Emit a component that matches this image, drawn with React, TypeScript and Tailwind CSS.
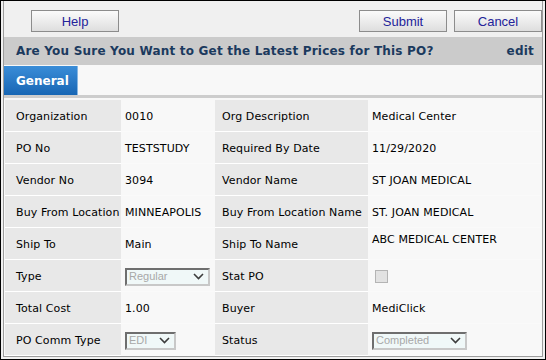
import React from 'react'

const verdana = { fontFamily: '"DejaVu Sans", Verdana, sans-serif' }

const Btn = ({ label }: { label: string }) => (
  <button
    className="w-[88px] h-[22px] border border-[#8c8c8c] bg-gradient-to-b from-[#fbfbfb] to-[#dedede] text-[13px] text-[#23239a] leading-none"
    style={{ fontFamily: '"Liberation Sans", Arial, sans-serif' }}
  >
    {label}
  </button>
)

const Select = ({ value, width }: { value: string; width: string }) => (
  <div
    className={`${width} h-[18px] flex items-center justify-between border-2 border-t-[#6e6e6e] border-l-[#6e6e6e] border-r-[#c8c8c8] border-b-[#c8c8c8] bg-[#f0f8f8] pl-[2px] pr-[4px] text-[11px] text-[#a8a8a8] tracking-normal`}
    style={{ fontFamily: '"Liberation Sans", Arial, sans-serif' }}
  >
    <span>{value}</span>
    <svg width="11" height="7" viewBox="0 0 11 7">
      <path d="M1 1 L5.5 5.5 L10 1" fill="none" stroke="#3c3c3c" strokeWidth="1.6" />
    </svg>
  </div>
)

type Row = {
  l1: string
  v1: React.ReactNode
  l2: string
  v2: React.ReactNode
  top?: boolean
}

const rows: Row[] = [
  { l1: 'Organization', v1: '0010', l2: 'Org Description', v2: 'Medical Center' },
  { l1: 'PO No', v1: 'TESTSTUDY', l2: 'Required By Date', v2: '11/29/2020' },
  { l1: 'Vendor No', v1: '3094', l2: 'Vendor Name', v2: 'ST JOAN MEDICAL' },
  { l1: 'Buy From Location', v1: 'MINNEAPOLIS', l2: 'Buy From Location Name', v2: 'ST. JOAN MEDICAL' },
  { l1: 'Ship To', v1: 'Main', l2: 'Ship To Name', v2: 'ABC MEDICAL CENTER', top: true },
  {
    l1: 'Type',
    v1: <Select value="Regular" width="w-[85px]" />,
    l2: 'Stat PO',
    v2: <span className="ml-[3px] block w-[13px] h-[13px] border border-[#b4b4b4] bg-[#e2e2e2]" />,
  },
  { l1: 'Total Cost', v1: '1.00', l2: 'Buyer', v2: 'MediClick' },
  {
    l1: 'PO Comm Type',
    v1: <Select value="EDI" width="w-[51px]" />,
    l2: 'Status',
    v2: <Select value="Completed" width="w-[95px]" />,
  },
]

export default function App() {
  return (
    <div
      className="w-[546px] h-[360px] border border-black bg-[#f0f0f0] px-[2px] pb-[2px] overflow-hidden"
      style={verdana}
    >
      <div className="h-[356px] border-x border-b border-[#9c9c9c] flex flex-col">
        <div className="h-[36px] flex items-start justify-between pt-[9px] pl-[27px]">
          <Btn label="Help" />
          <div className="flex gap-[7px]">
            <Btn label="Submit" />
            <Btn label="Cancel" />
          </div>
        </div>

        <div className="h-[28px] bg-[#cbcbcb] flex items-center justify-between pl-[12px] pr-[8px] text-[12px] font-bold text-[#1b3a5e] tracking-[0.2px]">
          <span>Are You Sure You Want to Get the Latest Prices for This PO?</span>
          <span>edit</span>
        </div>

        <div className="h-[30px] bg-[#f8f8f8] flex items-end">
          <div className="w-[74px] h-[29px] bg-gradient-to-b from-[#3a8dd8] to-[#1766b4] border-r border-[#86b6e2] flex items-center pl-[12px] text-[12px] font-bold text-white">
            General
          </div>
        </div>

        <div className="h-[3px] bg-[#cdcdcd]" />

        <div className="flex-1 bg-[#f8f8f8] pt-[2px] pl-[1px]">
          <div className="grid grid-cols-[116px_94px_153px_173px] text-[11px] text-black tracking-[0.1px] whitespace-nowrap">
            {rows.map((r) => (
              <React.Fragment key={r.l1}>
                <div className="h-[32px] border-b border-white bg-[#e8e8e8] flex items-center pl-[11px] pt-[3px] overflow-visible">
                  {r.l1}
                </div>
                <div
                  className={`h-[32px] border-b border-[#fafafa] flex items-center pl-[4px] ${
                    typeof r.v1 === 'string' ? 'pt-[3px]' : 'pt-[2px]'
                  }`}
                >
                  {r.v1}
                </div>
                <div className="h-[32px] border-b border-white bg-[#e8e8e8] flex items-center pl-[7px] pt-[3px]">
                  {r.l2}
                </div>
                <div
                  className={`h-[32px] border-b border-[#fafafa] flex pl-[4px] ${
                    r.top
                      ? 'items-start pt-[4px]'
                      : typeof r.v2 === 'string'
                        ? 'items-center pt-[3px]'
                        : 'items-center pt-[2px]'
                  }`}
                >
                  {r.v2}
                </div>
              </React.Fragment>
            ))}
          </div>
        </div>
      </div>
    </div>
  )
}
